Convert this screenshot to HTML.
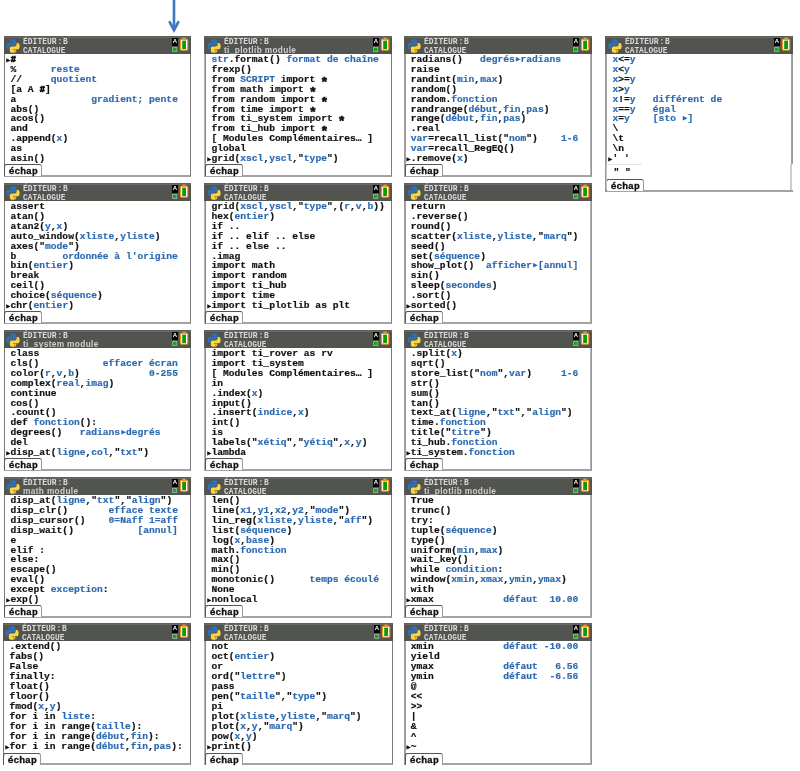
<!DOCTYPE html>
<html lang="fr"><head><meta charset="utf-8"><title>Catalogue Python TI</title>
<style>
html,body{margin:0;padding:0;background:#fff;}
body{will-change:transform;width:800px;height:771px;position:relative;overflow:hidden;font-family:"Liberation Mono",monospace;}
.panel{transform-origin:0 0;position:absolute;box-sizing:border-box;width:187px;height:141px;border:1px solid #7c7c7c;border-bottom:2px solid #a3a3a3;background:#fff;}
.panel.tall{height:156px;}
.panel.tall .tab{top:142px;}
.hd{position:absolute;left:-1px;right:-1px;top:-1px;height:17.7px;background:linear-gradient(to bottom,#5e5f5d 0,#5e5f5d 1px,#666966 1px,#666966 2px,#525450 2px);}
.py{position:absolute;left:2.2px;top:2.6px;width:14px;height:14px;}
.t1,.t2{position:absolute;left:19px;color:#d8d8d8;font-family:"Liberation Mono",monospace;font-weight:bold;white-space:pre;line-height:8px;height:8px;font-size:8px;transform-origin:0 0;}
.t1{top:1.8px;transform:scaleY(1.03);word-spacing:-4px;}
.t2{top:9.75px;font-size:7.85px;transform:scaleY(1.15);}
.t2.lc{font-family:"Liberation Sans",sans-serif;font-size:8.3px;letter-spacing:.35px;top:9.9px;transform:none;color:#cfcfcf;height:7.8px;overflow:hidden;}
.ka{position:absolute;right:13px;top:2px;width:6px;height:7.5px;background:#000;color:#fff;font-family:"Liberation Sans",sans-serif;font-weight:bold;font-size:6px;line-height:7.5px;text-align:center;}
.bd,.bd2{-webkit-text-stroke:0.2px;position:absolute;left:5.4px;top:17.6px;font-weight:bold;font-size:9.63px;line-height:10px;color:#111;white-space:pre;transform:scaleY(.992);transform-origin:0 0;}
.bd div,.bd2 div{height:10px;position:relative;}
.bd b,.bd2 b{color:#2d6ab0;font-weight:bold;}
i{font-style:normal;}
.tri{display:inline-block;width:5.78px;font-family:"DejaVu Sans Mono",monospace;font-size:11px;text-align:center;line-height:0;}
.cur{position:absolute;left:-5.2px;top:0.6px;font-family:"DejaVu Sans Mono",monospace;font-size:10px;line-height:10px;color:#000;margin-top:-1px;}
.tab{-webkit-text-stroke:0.3px;position:absolute;left:-1px;top:127px;box-sizing:border-box;width:37.8px;height:12px;border:1.2px solid #555;border-right:1.6px solid #999;border-bottom:none;border-radius:2.5px 2.5px 0 0;font-weight:bold;font-size:9.63px;line-height:13.6px;padding-left:3.8px;color:#111;background:#fff;}
.arrow{position:absolute;left:159px;top:0;fill:none;stroke:#3f76c1;stroke-width:2.6;stroke-linecap:butt;stroke-linejoin:miter;}
.arrow path + path{stroke-linecap:round;}
.strip{position:absolute;left:-1px;top:127px;width:187px;height:16px;background:#fff;border-left:1px solid #bbb;border-right:1px solid #bbb;box-sizing:border-box;}
.strip .bd2{left:6.4px;top:4.4px;}
.strip:before{content:"";position:absolute;left:0;top:0;width:35px;height:1px;background:#e6e6e6;}
.lb{position:absolute;z-index:3;}
.as{display:inline-block;width:5.78px;text-indent:-0.7px;font-size:13px;line-height:0;position:relative;top:3.7px;vertical-align:baseline;-webkit-text-stroke:0.7px;}
.ic{position:absolute;right:0;top:0;width:23px;height:18px;}
.r5 .bd{top:18.2px;transform:none;}
.r5 .tab{top:129px;height:12px;}
.hs{display:inline-block;width:5.78px;text-indent:0.35px;font-size:8.6px;line-height:0;-webkit-text-stroke:0.75px;position:relative;top:-0.3px;}
.c2{border-left-color:#8a8a8a;box-shadow:-1px 0 0 #b5b5b5;}
.c3{border-left-color:#9f9f9f;border-right-color:#959595;box-shadow:-1px 0 0 #9f9f9f,inset -1px 0 0 #b4b4b4;}
.c4{border-left-color:#a8a8a8;border-right-color:#9a9a9a;box-shadow:-1px 0 0 #999,inset -1px 0 0 #a0a0a0;}
.c2 .hd,.c3 .hd,.c4 .hd{box-shadow:-1px 0 0 #5c5d5b;}
.c3 .bd{left:4.8px;}

</style></head><body>
<svg width="0" height="0" style="position:absolute"><defs><g id="pylogo">
<path fill="#2f6fb3" d="M54.3 2C28 2 29.700000000000003 13.4 29.700000000000003 13.4l0 11.8h25.1v3.5H19.7S2.9 26.8 2.9 53.3c0 26.5 14.7 25.6 14.7 25.6h8.8V66.6s-.5-14.7 14.500000000000002-14.7h24.900000000000002s14 .2 14-13.6V15.600000000000001S81.9 2 54.3 2zM40.5 9.9a4.5 4.5 0 1 1 0 9 4.5 4.5 0 0 1 0-9z"/>
<path fill="#ffd53d" d="M55.7 108c26.300000000000004 0 24.6-11.4 24.6-11.4l0-11.8H55.2v-3.5h35.1S107.1 83.2 107.1 56.7c0-26.5-14.7-25.6-14.7-25.6h-8.8v12.3s.5 14.7-14.5 14.7H44.2s-14-.2-14 13.6v22.7S28.1 108 55.7 108zM69.5 100.1a4.5 4.5 0 1 1 0-9 4.5 4.5 0 0 1 0 9z"/>
</g><g id="ico">
<rect x="4.3" y="11.2" width="4.9" height="4.6" fill="#c4c0cc"/><rect x="4.9" y="11.8" width="3.7" height="3.4" fill="#0cae0c"/>
<rect x="14.5" y="1.6" width="3.2" height="1.6" fill="#f7941d"/>
<rect x="12.5" y="3.3" width="7.2" height="10.8" rx="0.8" fill="#fff" stroke="#f7941d" stroke-width="1.3"/>
<rect x="14.2" y="4.6" width="3.8" height="8.4" fill="#0a9a0a"/>
</g></defs></svg>

<div class="lb" style="left:606px;top:164px;width:1px;height:26px;background:#c6c6c6"></div>
<div class="lb" style="left:790.4px;top:164px;width:2.6px;height:26px;background:linear-gradient(to right,#cdcdcd 0,#cdcdcd 1.6px,#fff 1.6px)"></div>
<svg class="arrow" width="30" height="36" viewBox="0 0 30 36"><path d="M15 0 V30" /><path d="M10.7 22.1 L15 30.2 L19.3 22.1" /></svg>
<div class="panel c1" style="left:4px;top:36px">
<div class="hd"><svg class="py" viewBox="0 0 110 110"><use href="#pylogo"/></svg><span class="t1">ÉDITEUR : B</span><span class="t2">CATALOGUE</span><span class="ka">A</span><svg class="ic" viewBox="0 0 23 18"><use href="#ico"/></svg></div>
<div class="bd"><div><i class="cur">▸</i><i class="hs">#</i></div><div>%      <b>reste</b></div><div>//     <b>quotient</b></div><div>[a A <i class="hs">#</i>]</div><div>a             <b>gradient; pente</b></div><div>abs()</div><div>acos()</div><div>and</div><div>.append(<b>x</b>)</div><div>as</div><div>asin()</div></div>
<div class="tab"><span>échap</span></div>
</div>
<div class="panel c2" style="left:205px;top:36px">
<div class="hd"><svg class="py" viewBox="0 0 110 110"><use href="#pylogo"/></svg><span class="t1">ÉDITEUR : B</span><span class="t2 lc">ti_plotlib module</span><span class="ka">A</span><svg class="ic" viewBox="0 0 23 18"><use href="#ico"/></svg></div>
<div class="bd"><div><b>str</b>.format() <b>format de chaîne</b></div><div>frexp()</div><div>from <b>SCRIPT</b> import <i class="as">*</i></div><div>from math import <i class="as">*</i></div><div>from random import <i class="as">*</i></div><div>from time import <i class="as">*</i></div><div>from ti_system import <i class="as">*</i></div><div>from ti_hub import <i class="as">*</i></div><div>[ Modules Complémentaires… ]</div><div>global</div><div><i class="cur">▸</i>grid(<b>xscl</b>,<b>yscl</b>,"<b>type</b>")</div></div>
<div class="tab"><span>échap</span></div>
</div>
<div class="panel c3" style="left:405px;top:36px">
<div class="hd"><svg class="py" viewBox="0 0 110 110"><use href="#pylogo"/></svg><span class="t1">ÉDITEUR : B</span><span class="t2">CATALOGUE</span><span class="ka">A</span><svg class="ic" viewBox="0 0 23 18"><use href="#ico"/></svg></div>
<div class="bd"><div>radians()   <b>degrés<i class="tri">▸</i>radians</b></div><div>raise</div><div>randint(<b>min</b>,<b>max</b>)</div><div>random()</div><div>random.<b>fonction</b></div><div>randrange(<b>début</b>,<b>fin</b>,<b>pas</b>)</div><div>range(<b>début</b>,<b>fin</b>,<b>pas</b>)</div><div>.real</div><div><b>var</b>=recall_list("<b>nom</b>")    <b>1-6</b></div><div><b>var</b>=recall_RegEQ()</div><div><i class="cur">▸</i>.remove(<b>x</b>)</div></div>
<div class="tab"><span>échap</span></div>
</div>
<div class="panel c1" style="left:4px;top:183px">
<div class="hd"><svg class="py" viewBox="0 0 110 110"><use href="#pylogo"/></svg><span class="t1">ÉDITEUR : B</span><span class="t2">CATALOGUE</span><span class="ka">A</span><svg class="ic" viewBox="0 0 23 18"><use href="#ico"/></svg></div>
<div class="bd"><div>assert</div><div>atan()</div><div>atan2(<b>y</b>,<b>x</b>)</div><div>auto_window(<b>xliste</b>,<b>yliste</b>)</div><div>axes("<b>mode</b>")</div><div>b        <b>ordonnée à l'origine</b></div><div>bin(<b>entier</b>)</div><div>break</div><div>ceil()</div><div>choice(<b>séquence</b>)</div><div><i class="cur">▸</i>chr(<b>entier</b>)</div></div>
<div class="tab"><span>échap</span></div>
</div>
<div class="panel c2" style="left:205px;top:183px">
<div class="hd"><svg class="py" viewBox="0 0 110 110"><use href="#pylogo"/></svg><span class="t1">ÉDITEUR : B</span><span class="t2">CATALOGUE</span><span class="ka">A</span><svg class="ic" viewBox="0 0 23 18"><use href="#ico"/></svg></div>
<div class="bd"><div>grid(<b>xscl</b>,<b>yscl</b>,"<b>type</b>",(<b>r</b>,<b>v</b>,<b>b</b>))</div><div>hex(<b>entier</b>)</div><div>if ..</div><div>if .. elif .. else</div><div>if .. else ..</div><div>.imag</div><div>import math</div><div>import random</div><div>import ti_hub</div><div>import time</div><div><i class="cur">▸</i>import ti_plotlib as plt</div></div>
<div class="tab"><span>échap</span></div>
</div>
<div class="panel c3" style="left:405px;top:183px">
<div class="hd"><svg class="py" viewBox="0 0 110 110"><use href="#pylogo"/></svg><span class="t1">ÉDITEUR : B</span><span class="t2">CATALOGUE</span><span class="ka">A</span><svg class="ic" viewBox="0 0 23 18"><use href="#ico"/></svg></div>
<div class="bd"><div>return</div><div>.reverse()</div><div>round()</div><div>scatter(<b>xliste</b>,<b>yliste</b>,"<b>marq</b>")</div><div>seed()</div><div>set(<b>séquence</b>)</div><div>show_plot()  <b>afficher<i class="tri">▸</i>[annul]</b></div><div>sin()</div><div>sleep(<b>secondes</b>)</div><div>.sort()</div><div><i class="cur">▸</i>sorted()</div></div>
<div class="tab"><span>échap</span></div>
</div>
<div class="panel c1" style="left:4px;top:330px">
<div class="hd"><svg class="py" viewBox="0 0 110 110"><use href="#pylogo"/></svg><span class="t1">ÉDITEUR : B</span><span class="t2 lc">ti_system module</span><span class="ka">A</span><svg class="ic" viewBox="0 0 23 18"><use href="#ico"/></svg></div>
<div class="bd"><div>class</div><div>cls()           <b>effacer écran</b></div><div>color(<b>r</b>,<b>v</b>,<b>b</b>)            <b>0-255</b></div><div>complex(<b>real</b>,<b>imag</b>)</div><div>continue</div><div>cos()</div><div>.count()</div><div>def <b>fonction</b>():</div><div>degrees()   <b>radians<i class="tri">▸</i>degrés</b></div><div>del</div><div><i class="cur">▸</i>disp_at(<b>ligne</b>,<b>col</b>,"<b>txt</b>")</div></div>
<div class="tab"><span>échap</span></div>
</div>
<div class="panel c2" style="left:205px;top:330px">
<div class="hd"><svg class="py" viewBox="0 0 110 110"><use href="#pylogo"/></svg><span class="t1">ÉDITEUR : B</span><span class="t2">CATALOGUE</span><span class="ka">A</span><svg class="ic" viewBox="0 0 23 18"><use href="#ico"/></svg></div>
<div class="bd"><div>import ti_rover as rv</div><div>import ti_system</div><div>[ Modules Complémentaires… ]</div><div>in</div><div>.index(<b>x</b>)</div><div>input()</div><div>.insert(<b>indice</b>,<b>x</b>)</div><div>int()</div><div>is</div><div>labels("<b>xétiq</b>","<b>yétiq</b>",<b>x</b>,<b>y</b>)</div><div><i class="cur">▸</i>lambda</div></div>
<div class="tab"><span>échap</span></div>
</div>
<div class="panel c3" style="left:405px;top:330px">
<div class="hd"><svg class="py" viewBox="0 0 110 110"><use href="#pylogo"/></svg><span class="t1">ÉDITEUR : B</span><span class="t2">CATALOGUE</span><span class="ka">A</span><svg class="ic" viewBox="0 0 23 18"><use href="#ico"/></svg></div>
<div class="bd"><div>.split(<b>x</b>)</div><div>sqrt()</div><div>store_list("<b>nom</b>",<b>var</b>)     <b>1-6</b></div><div>str()</div><div>sum()</div><div>tan()</div><div>text_at(<b>ligne</b>,"<b>txt</b>","<b>align</b>")</div><div>time.<b>fonction</b></div><div>title("<b>titre</b>")</div><div>ti_hub.<b>fonction</b></div><div><i class="cur">▸</i>ti_system.<b>fonction</b></div></div>
<div class="tab"><span>échap</span></div>
</div>
<div class="panel c1" style="left:4px;top:477px">
<div class="hd"><svg class="py" viewBox="0 0 110 110"><use href="#pylogo"/></svg><span class="t1">ÉDITEUR : B</span><span class="t2 lc">math module</span><span class="ka">A</span><svg class="ic" viewBox="0 0 23 18"><use href="#ico"/></svg></div>
<div class="bd"><div>disp_at(<b>ligne</b>,"<b>txt</b>","<b>align</b>")</div><div>disp_clr()       <b>efface texte</b></div><div>disp_cursor()    <b>0=Naff 1=aff</b></div><div>disp_wait()           <b>[annul]</b></div><div>e</div><div>elif :</div><div>else:</div><div>escape()</div><div>eval()</div><div>except <b>exception</b>:</div><div><i class="cur">▸</i>exp()</div></div>
<div class="tab"><span>échap</span></div>
</div>
<div class="panel c2" style="left:205px;top:477px">
<div class="hd"><svg class="py" viewBox="0 0 110 110"><use href="#pylogo"/></svg><span class="t1">ÉDITEUR : B</span><span class="t2">CATALOGUE</span><span class="ka">A</span><svg class="ic" viewBox="0 0 23 18"><use href="#ico"/></svg></div>
<div class="bd"><div>len()</div><div>line(<b>x1</b>,<b>y1</b>,<b>x2</b>,<b>y2</b>,"<b>mode</b>")</div><div>lin_reg(<b>xliste</b>,<b>yliste</b>,"<b>aff</b>")</div><div>list(<b>séquence</b>)</div><div>log(<b>x</b>,<b>base</b>)</div><div>math.<b>fonction</b></div><div>max()</div><div>min()</div><div>monotonic()      <b>temps écoulé</b></div><div>None</div><div><i class="cur">▸</i>nonlocal</div></div>
<div class="tab"><span>échap</span></div>
</div>
<div class="panel c3" style="left:405px;top:477px">
<div class="hd"><svg class="py" viewBox="0 0 110 110"><use href="#pylogo"/></svg><span class="t1">ÉDITEUR : B</span><span class="t2 lc">ti_plotlib module</span><span class="ka">A</span><svg class="ic" viewBox="0 0 23 18"><use href="#ico"/></svg></div>
<div class="bd"><div>True</div><div>trunc()</div><div>try:</div><div>tuple(<b>séquence</b>)</div><div>type()</div><div>uniform(<b>min</b>,<b>max</b>)</div><div>wait_key()</div><div>while <b>condition</b>:</div><div>window(<b>xmin</b>,<b>xmax</b>,<b>ymin</b>,<b>ymax</b>)</div><div>with</div><div><i class="cur">▸</i>xmax            <b>défaut  10.00</b></div></div>
<div class="tab"><span>échap</span></div>
</div>
<div class="panel r5 c1" style="left:3px;top:623px;width:188px;height:142px">
<div class="hd"><svg class="py" viewBox="0 0 110 110"><use href="#pylogo"/></svg><span class="t1">ÉDITEUR : B</span><span class="t2">CATALOGUE</span><span class="ka">A</span><svg class="ic" viewBox="0 0 23 18"><use href="#ico"/></svg></div>
<div class="bd"><div>.extend()</div><div>fabs()</div><div>False</div><div>finally:</div><div>float()</div><div>floor()</div><div>fmod(<b>x</b>,<b>y</b>)</div><div>for i in <b>liste</b>:</div><div>for i in range(<b>taille</b>):</div><div>for i in range(<b>début</b>,<b>fin</b>):</div><div><i class="cur">▸</i>for i in range(<b>début</b>,<b>fin</b>,<b>pas</b>):</div></div>
<div class="tab"><span>échap</span></div>
</div>
<div class="panel r5 c2" style="left:205px;top:623px;width:188px;height:142px">
<div class="hd"><svg class="py" viewBox="0 0 110 110"><use href="#pylogo"/></svg><span class="t1">ÉDITEUR : B</span><span class="t2">CATALOGUE</span><span class="ka">A</span><svg class="ic" viewBox="0 0 23 18"><use href="#ico"/></svg></div>
<div class="bd"><div>not</div><div>oct(<b>entier</b>)</div><div>or</div><div>ord("<b>lettre</b>")</div><div>pass</div><div>pen("<b>taille</b>","<b>type</b>")</div><div>pi</div><div>plot(<b>xliste</b>,<b>yliste</b>,"<b>marq</b>")</div><div>plot(<b>x</b>,<b>y</b>,"<b>marq</b>")</div><div>pow(<b>x</b>,<b>y</b>)</div><div><i class="cur">▸</i>print()</div></div>
<div class="tab"><span>échap</span></div>
</div>
<div class="panel r5 c3" style="left:405px;top:623px;width:187px;height:142px">
<div class="hd"><svg class="py" viewBox="0 0 110 110"><use href="#pylogo"/></svg><span class="t1">ÉDITEUR : B</span><span class="t2">CATALOGUE</span><span class="ka">A</span><svg class="ic" viewBox="0 0 23 18"><use href="#ico"/></svg></div>
<div class="bd"><div>xmin            <b>défaut -10.00</b></div><div>yield</div><div>ymax            <b>défaut   6.56</b></div><div>ymin            <b>défaut  -6.56</b></div><div>@</div><div>&lt;&lt;</div><div>&gt;&gt;</div><div>|</div><div>&amp;</div><div>^</div><div><i class="cur">▸</i>~</div></div>
<div class="tab"><span>échap</span></div>
</div>
<div class="panel tall c4" style="left:606px;top:36px">
<div class="hd"><svg class="py" viewBox="0 0 110 110"><use href="#pylogo"/></svg><span class="t1">ÉDITEUR : B</span><span class="t2">CATALOGUE</span><span class="ka">A</span><svg class="ic" viewBox="0 0 23 18"><use href="#ico"/></svg></div>
<div class="bd"><div><b>x</b>&lt;=<b>y</b></div><div><b>x</b>&lt;<b>y</b></div><div><b>x</b>&gt;=<b>y</b></div><div><b>x</b>&gt;<b>y</b></div><div><b>x</b>!=<b>y</b>   <b>différent de</b></div><div><b>x</b>==<b>y</b>   <b>égal</b></div><div><b>x</b>=<b>y</b>    <b>[sto <i class="tri">▸</i>]</b></div><div>\</div><div>\t</div><div>\n</div><div><i class="cur">▸</i>' '</div></div>
<div class="strip"><div class="bd2"><div>" "</div></div></div>
<div class="tab"><span>échap</span></div>
</div>
</body></html>
